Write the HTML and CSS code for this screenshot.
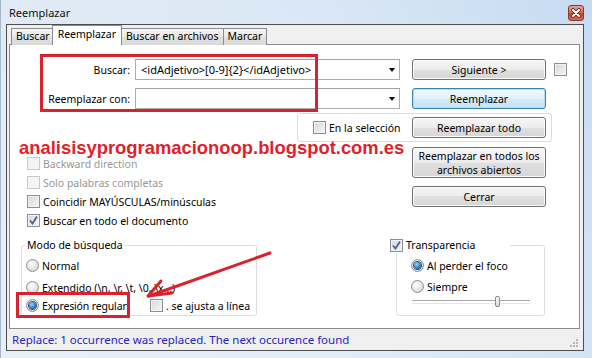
FILE: index.html
```html
<!DOCTYPE html>
<html lang="es">
<head>
    <meta charset="UTF-8">
    <title>Reemplazar</title>
    <link rel="stylesheet" href="styles.css">
</head>
<body>

    <div class="window">
        <div class="titlebar">
            <span class="title">Reemplazar</span>
            <span class="close-btn">
                <svg width="14" height="14" viewBox="0 0 14 14">
                    <path d="M4 4 L10 10 M10 4 L4 10" stroke="#6b2418" stroke-width="3.6" stroke-linecap="round"/>
                    <path d="M4 4 L10 10 M10 4 L4 10" stroke="#fff" stroke-width="2" stroke-linecap="round"/>
                </svg>
            </span>
        </div>

        <div class="client">
            <div class="tabs">
                <div class="tab">Buscar</div>
                <div class="tab active">Reemplazar</div>
                <div class="tab">Buscar en archivos</div>
                <div class="tab">Marcar</div>
            </div>

            <div class="panel">
                <!-- Fila buscar -->
                <div class="row first">
                    <div class="field">
                        <label>Buscar:</label>
                        <div class="combo"><span>&lt;idAdjetivo&gt;[0-9]{2}&lt;/idAdjetivo&gt;</span><i class="drop"></i></div>
                    </div>
                    <button class="btn">Siguiente &gt;</button>
                    <span class="cb"></span>
                </div>

                <!-- Fila reemplazar -->
                <div class="row second">
                    <div class="field">
                        <label>Reemplazar con:</label>
                        <div class="combo"><span></span><i class="drop"></i></div>
                    </div>
                    <button class="btn default">Reemplazar</button>
                </div>

                <div class="selection-group">
                    <label class="check sel"><span class="cb"></span>En la selección</label>
                    <button class="btn">Reemplazar todo</button>
                </div>

                <div class="middle">
                    <div class="options">
                        <label class="check disabled"><span class="cb"></span>Backward direction</label>
                        <label class="check disabled"><span class="cb"></span>Solo palabras completas</label>
                        <label class="check"><span class="cb"></span>Coincidir MAYÚSCULAS/minúsculas</label>
                        <label class="check"><span class="cb on"><svg width="11" height="11" viewBox="0 0 11 11"><path d="M2 5.5 L4.5 8.5 L9 1.5" fill="none" stroke="#4a5f8e" stroke-width="1.7"/></svg></span>Buscar en todo el documento</label>
                    </div>
                    <div class="actions">
                        <button class="btn tall">Reemplazar en todos los<br>archivos abiertos</button>
                        <button class="btn">Cerrar</button>
                    </div>
                </div>

                <div class="bottom">
                    <fieldset class="mode">
                        <legend>Modo de búsqueda</legend>
                        <label class="radio r1"><span class="rb"></span>Normal</label>
                        <label class="radio r2"><span class="rb"></span>Extendido (\n, \r, \t, \0, \x...)</label>
                        <div class="regex-row">
                            <label class="radio r3"><span class="rb on"></span>Expresión regular</label>
                            <label class="check"><span class="cb"></span>. se ajusta a línea</label>
                        </div>
                    </fieldset>

                    <fieldset class="transp">
                        <legend><span class="cb on"><svg width="11" height="11" viewBox="0 0 11 11"><path d="M2 5.5 L4.5 8.5 L9 1.5" fill="none" stroke="#4a5f8e" stroke-width="1.7"/></svg></span>Transparencia</legend>
                        <label class="radio t1"><span class="rb on"></span>Al perder el foco</label>
                        <label class="radio t2"><span class="rb"></span>Siempre</label>
                        <div class="slider"><span class="thumb"></span></div>
                    </fieldset>
                </div>

                <!-- Anotaciones encima del dialogo -->
                <div class="watermark">analisisyprogramacionoop.blogspot.com.es</div>
                <div class="mark mark-find"></div>
                <div class="mark mark-regex"></div>
                <svg class="note-arrow" width="570" height="283" viewBox="0 0 570 283">
                    <path d="M260 208 L139 251" stroke="#d9222d" stroke-width="3" stroke-linecap="round"/>
                    <path d="M151 236 L138 251 L162 248" fill="none" stroke="#d9222d" stroke-width="3" stroke-linecap="round" stroke-linejoin="round"/>
                </svg>
            </div>

            <div class="statusbar">
                Replace: 1 occurrence was replaced. The next occurence found
                <svg class="grip" width="9" height="9" viewBox="0 0 9 9">
                    <rect x="6" y="0" width="2" height="2" fill="#b5b5b5"/>
                    <rect x="3" y="3" width="2" height="2" fill="#b5b5b5"/>
                    <rect x="6" y="3" width="2" height="2" fill="#b5b5b5"/>
                    <rect x="0" y="6" width="2" height="2" fill="#b5b5b5"/>
                    <rect x="3" y="6" width="2" height="2" fill="#b5b5b5"/>
                    <rect x="6" y="6" width="2" height="2" fill="#b5b5b5"/>
                </svg>
            </div>
        </div>
    </div>

</body>
</html>
```

FILE: styles.css
```css
/* Reset */
* {
    margin: 0;
    padding: 0;
    box-sizing: border-box;
}

body {
    font-family: 'Noto Sans', 'Open Sans', sans-serif;
    font-size: 10.5px;
    color: #000;
    background: #fff;
}

/* Ventana */
.window {
    width: 592px;
    height: 358px;
    display: flex;
    flex-direction: column;
    background:
        linear-gradient(to bottom, rgba(255, 255, 255, 0.15), rgba(255, 255, 255, 0.35)),
        linear-gradient(to right, #dbe7f3, #d3e3f3 55%, #bcd5f0);
    border-left: 1px solid #a9b8c8;
}

.titlebar {
    height: 24px;
    display: flex;
    align-items: center;
    justify-content: space-between;
    padding: 0 8px 0 8px;
}

.title {
    font-size: 11px;
    color: #111;
}

.close-btn {
    width: 16px;
    height: 16px;
    margin-top: 2px;
    border: 1px solid #8a3a2b;
    border-radius: 3px;
    background: linear-gradient(#e4a596, #d4705c 45%, #c0462f 55%, #d36a4f);
    display: flex;
    align-items: center;
    justify-content: center;
}

.client {
    flex: 1;
    margin: 0 8px 7px 5px;
    border: 1px solid #4e4e4e;
    background: #f0f0f0;
    display: flex;
    flex-direction: column;
    padding: 0 3px 0 2px;
}

/* Pestañas */
.tabs {
    height: 20px;
    margin-bottom: -1px;
    padding-left: 2px;
    display: flex;
    align-items: flex-end;
    position: relative;
    z-index: 1;
}

.tab {
    height: 17px;
    padding: 0 4px;
    line-height: 15px;
    border: 1px solid #898c95;
    border-bottom: none;
    background: linear-gradient(#f4f4f4, #e9e9e9 50%, #e0e0e0 50%, #d9d9d9);
    margin-right: -1px;
}

.tab.active {
    height: 20px;
    padding: 1px 5px 0;
    margin: 0 -1px 0 -2px;
    background: #fff;
    position: relative;
    z-index: 2;
}

.panel {
    flex: 1;
    border: 1px solid #898c95;
    background: #fff;
    position: relative;
}

/* Filas superiores */
.row {
    display: flex;
    align-items: center;
    height: 21px;
}

.row.first { margin-top: 14px; }
.row.second { margin-top: 8px; }

.field {
    width: 390px;
    display: flex;
    align-items: center;
}

.field label {
    width: 125px;
    padding-right: 5px;
    text-align: right;
}

.combo {
    width: 265px;
    height: 21px;
    border: 1px solid #abadb3;
    border-top-color: #a0a3aa;
    display: flex;
    align-items: center;
    padding: 0 4px 0 5px;
    font-size: 11px;
}

.combo span {
    flex: 1;
}

.drop {
    width: 0;
    height: 0;
    border-left: 3.5px solid transparent;
    border-right: 3.5px solid transparent;
    border-top: 4px solid #000;
}

.row .btn { margin-left: 12px; }
.row > .cb { margin-left: 8px; }

/* Botones */
.btn {
    width: 134px;
    height: 21px;
    font: inherit;
    color: #000;
    border: 1px solid #707070;
    border-radius: 3px;
    background: linear-gradient(#f6f6f6, #ececec 50%, #e0e0e0 50%, #d6d6d6);
    box-shadow: inset 0 0 0 1px #fbfbfb;
}

.btn.default {
    border-color: #3c7fb1;
    background: linear-gradient(#eef8fe, #e2f2fc 50%, #d0ebfb 50%, #c5e5f8);
    box-shadow: inset 0 0 0 1px #b4def5;
}

.btn.tall {
    height: 31px;
    line-height: 14px;
}

.selection-group {
    margin: 4px 0 0 287px;
    width: 255px;
    height: 29px;
    border: 1px solid #dadde2;
    border-radius: 3px;
    display: flex;
    align-items: center;
    padding-left: 15px;
}

.check.sel { width: 99px; }

/* Casillas */
.check {
    display: flex;
    align-items: center;
    gap: 3px;
    height: 19px;
}

.cb {
    width: 13px;
    height: 13px;
    flex-shrink: 0;
    border: 1px solid #8e8f8f;
    background: linear-gradient(135deg, #d3d7dd, #f6f6f6);
    box-shadow: inset 0 0 0 1px #f3f3f3;
    display: flex;
    align-items: center;
    justify-content: center;
}

.check.disabled { color: #979797; }

.check.disabled .cb {
    border-color: #c9c9c9;
    background: #f4f4f4;
    box-shadow: none;
}

.middle {
    display: flex;
}

.options {
    width: 402px;
    padding: 12px 0 0 17px;
}

.actions {
    padding-top: 5px;
    display: flex;
    flex-direction: column;
    gap: 8px;
}

/* Grupos inferiores */
.bottom {
    display: flex;
    padding-top: 8px;
}

fieldset {
    height: 78px;
    border: 1px solid #dadde2;
    border-radius: 3px;
}

legend {
    line-height: 15px;
}

.mode {
    margin-left: 11px;
    width: 236px;
    padding-left: 4px;
}

.mode legend {
    padding: 0 2px;
    margin-left: -1px;
}

.radio {
    display: flex;
    align-items: center;
    gap: 3px;
    height: 19px;
}

.rb {
    width: 13px;
    height: 13px;
    flex-shrink: 0;
    border: 1px solid #8e8f8f;
    border-radius: 50%;
    background: radial-gradient(circle at 40% 35%, #fff, #e4e4e4 55%, #cfcfcf);
    display: flex;
    align-items: center;
    justify-content: center;
}

.rb.on::after {
    content: '';
    width: 7px;
    height: 7px;
    border-radius: 50%;
    background: radial-gradient(circle at 40% 35%, #9bd8f7, #2f7fc0 55%, #173f6b);
    box-shadow: 0 0 0 1px #2c4f74;
}

.r1 { margin-top: 3px; }
.r2 { margin-top: 3px; }

.regex-row {
    display: flex;
    margin-top: -1px;
}

.r3 {
    width: 124px;
    letter-spacing: -0.15px;
}

.transp {
    margin-left: 139px;
    width: 149px;
    padding-left: 14px;
}

.transp legend {
    width: 120px;
    margin-left: -21px;
    display: flex;
    align-items: center;
    gap: 3px;
}

.t1 { margin-top: 3px; }
.t2 { margin-top: 2px; }

.slider {
    width: 118px;
    height: 11px;
    margin-left: 1px;
    position: relative;
    display: flex;
    align-items: center;
}

.slider::before {
    content: '';
    flex: 1;
    height: 2px;
    border-top: 1px solid #a9a9a9;
    border-bottom: 1px solid #e6e6e6;
}

.thumb {
    position: absolute;
    left: 83px;
    top: 0;
    width: 5px;
    height: 11px;
    border: 1px solid #8a8a8a;
    border-radius: 2px;
    background: linear-gradient(#fafafa, #dcdcdc);
}

/* Anotaciones */
.watermark {
    position: absolute;
    left: 9px;
    top: 94px;
    font-family: 'Liberation Sans', Arial, sans-serif;
    font-weight: bold;
    font-size: 18.4px;
    line-height: 18.4px;
    color: #e01f2c;
    white-space: nowrap;
}

.mark {
    position: absolute;
    border: 3px solid #d9222d;
}

.mark-find {
    left: 30px;
    top: 9px;
    width: 278px;
    height: 58px;
}

.mark-regex {
    left: 6px;
    top: 247px;
    width: 114px;
    height: 26px;
}

.note-arrow {
    position: absolute;
    left: 0;
    top: 0;
    pointer-events: none;
}

/* Barra de estado */
.statusbar {
    height: 21px;
    line-height: 21px;
    padding-left: 3px;
    font-size: 11.5px;
    color: #2424c6;
    position: relative;
}

.grip {
    position: absolute;
    right: 1px;
    bottom: 2px;
}
```
